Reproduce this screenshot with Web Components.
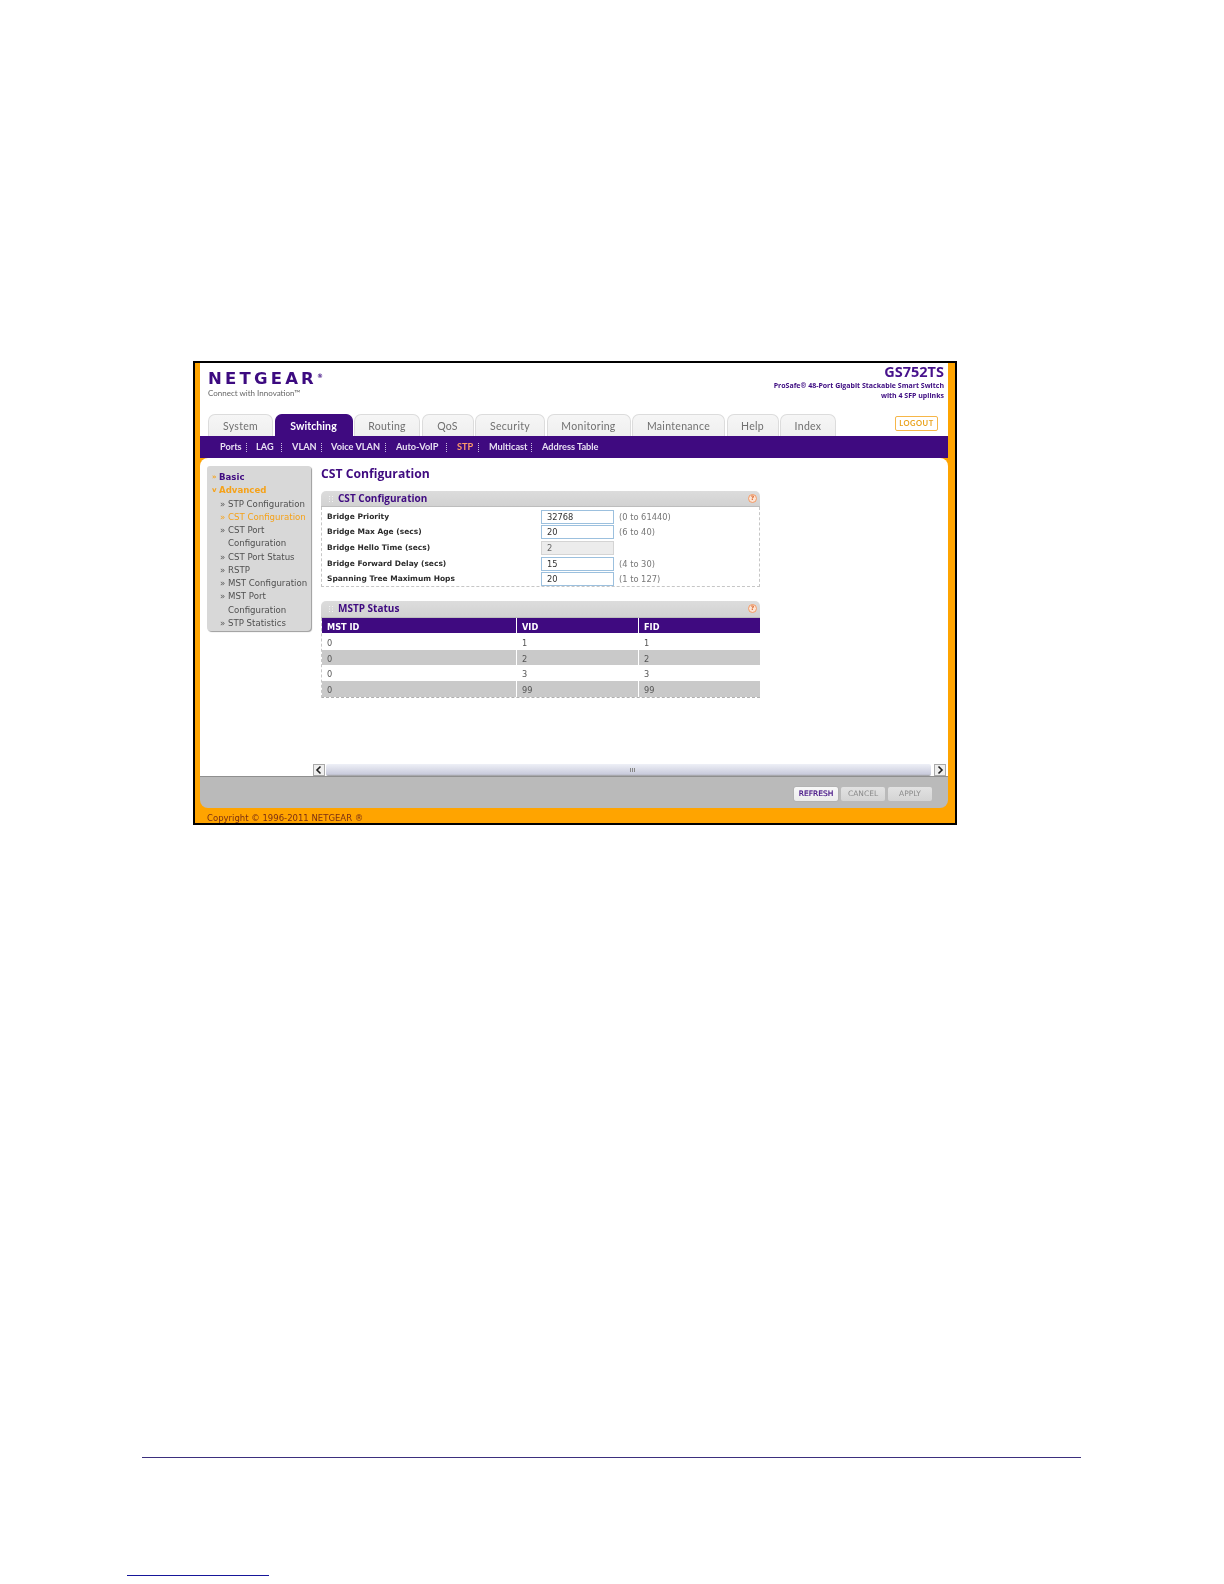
<!DOCTYPE html>
<html>
<head>
<meta charset="utf-8">
<title>CST Configuration</title>
<style>
  html, body { margin: 0; background: #fff; }
  body { font-family: "DejaVu Sans", sans-serif; }
</style>
</head>
<body>
<manual-page>
  <screen-frame>
    <top-header></top-header>
    <tab-bar active="Switching"></tab-bar>
    <sub-nav active="STP"></sub-nav>
    <main-area>
      <side-menu></side-menu>
      <page-title>CST Configuration</page-title>
      <panel-head>CST Configuration</panel-head>
      <cst-form></cst-form>
      <panel-head class="second">MSTP Status</panel-head>
      <mstp-table></mstp-table>
    </main-area>
    <action-bar></action-bar>
    <copy-line>Copyright © 1996-2011 NETGEAR ®</copy-line>
  </screen-frame>
</manual-page>

<script>
  // small helper so every element has an open shadow root
  class Base extends HTMLElement {
    constructor() {
      super();
      this.attachShadow({ mode: "open" });
    }
    connectedCallback() {
      this.shadowRoot.innerHTML = this.render();
    }
  }

  class ManualPage extends Base {
    render() {
      return `<style>
        :host { display: block; height: 1584px; overflow: hidden; background: #fff; }
        .shot { padding: 361px 0 0 193px; }
        .rule { height: 1px; background: #3b2f7d; margin: 632px 0 0 142px; width: 939px; }
        .foot { height: 1px; background: #16169a; margin: 117px 0 0 127px; width: 142px; }
      </style>
      <div class="shot"><slot></slot></div>
      <div class="rule"></div>
      <div class="foot"></div>`;
    }
  }

  class ScreenFrame extends Base {
    render() {
      return `<style>
        :host {
          display: flex; flex-direction: column; box-sizing: border-box;
          width: 764px; height: 464px;
          border: 2px solid #000; background: #ffa400;
          padding: 0 7px 0 5px;
          filter: blur(.4px);
        }
      </style><slot></slot>`;
    }
  }

  class TopHeader extends Base {
    render() {
      return `<style>
        :host { display: flex; justify-content: space-between; height: 51px; background: #fff; padding: 0 4px 0 8px; color: #3f0f7f; }
        .logo { font: 700 16.5px/16px "DejaVu Sans", sans-serif; letter-spacing: 3.2px; color: #3c0a80; margin-top: 8px; white-space: nowrap; }
        .logo sup { font-size: 6px; letter-spacing: 0; vertical-align: 6px; line-height: 0; }
        .tag { font: 8px/10px Lato, sans-serif; color: #666; margin-top: 1px; }
        .right { text-align: right; }
        .model { font: 700 14.5px/17px "Open Sans", sans-serif; color: #47128c; }
        .desc { font: 700 7px/9.2px "Open Sans", sans-serif; color: #3c0a80; margin-top: 1.400px; }
      </style>
      <div>
        <div class="logo">NETGEAR<sup>®</sup></div>
        <div class="tag">Connect with Innovation™</div>
      </div>
      <div class="right">
        <div class="model">GS752TS</div>
        <div class="desc">ProSafe® 48-Port Gigabit Stackable Smart Switch<br>with 4 SFP uplinks</div>
      </div>`;
    }
  }

  const TABS = [["System", 65], ["Switching", 78], ["Routing", 66], ["QoS", 52], ["Security", 70], ["Monitoring", 84], ["Maintenance", 93], ["Help", 52], ["Index", 56]];

  class TabBar extends Base {
    render() {
      const active = this.getAttribute("active");
      const tabs = TABS.map(([n, w]) =>
        `<div class="tab ${n === active ? "on" : ""}" style="width:${w}px">${n}</div>`).join("");
      return `<style>
        :host { display: flex; align-items: flex-end; height: 22px; background: #fff; padding-left: 8px; gap: 1.5px; position: relative; }
        .tab {
          box-sizing: border-box; height: 22px; border: 1px solid #dcdcdc; border-bottom: 0;
          border-radius: 7px 7px 0 0; background: linear-gradient(#f6f6f6, #efefef);
          text-align: center; font: 10.5px/22px Lato, sans-serif; letter-spacing: .3px; color: #707070;
        }
        .on { background: #3f0a80; border-color: #3f0a80; color: #fff; font-weight: 700; letter-spacing: .1px; }
        .logout {
          position: absolute; left: 695px; top: 2px; box-sizing: border-box; width: 43px; height: 15px;
          border: 1px solid #f6b648; border-radius: 2px; background: #fff;
          text-align: center; font: 700 7.5px/13px Lato, sans-serif; letter-spacing: .5px; color: #e9a21c;
        }
      </style>${tabs}<div class="logout">LOGOUT</div>`;
    }
  }

  // name, distance to next item, place of the dotted separator
  const SUBS = [["Ports", 36, 26], ["LAG", 36, 25], ["VLAN", 39, 29], ["Voice VLAN", 65, 54], ["Auto-VoIP", 61, 50], ["STP", 32, 21], ["Multicast", 53, 42], ["Address Table", 70]];

  class SubNav extends Base {
    render() {
      const active = this.getAttribute("active");
      const items = SUBS.map(([n, w, s]) =>
        `<span class="it ${n === active ? "on" : ""}" style="width:${w}px">${n}${s ? `<i style="left:${s}px"></i>` : ""}</span>`).join("");
      return `<style>
        :host { display: flex; align-items: center; height: 22px; background: #3f0a80; padding-left: 20px; }
        .it { position: relative; display: block; font: 700 9.2px/22px Lato, sans-serif; color: #e8e0f2; white-space: nowrap; }
        .on { color: #ff9c6a; }
        i { position: absolute; top: 7px; height: 9px; border-right: 1px dotted #cbbfe0; }
      </style>${items}`;
    }
  }

  class MainArea extends Base {
    render() {
      return `<style>
        :host { display: flex; flex-direction: column; height: 319px; background: #fff; border-radius: 8px 8px 0 0; border-bottom: 1px solid #8f8f8f; box-sizing: border-box; }
        .body { flex: 1; display: flex; min-height: 0; }
        .col { width: 439px; margin-left: 10px; }
        .bar { display: flex; align-items: stretch; height: 12px; margin: 0 2px 0 113px; gap: 1px; }
        .btn { box-sizing: border-box; width: 12px; border: 1px solid #a9a9a9; background: #eee; }
        .btn svg { display: block; }
        .btn.next { margin-left: 2px; }
        .track { flex: 1; position: relative; background: linear-gradient(#eef0f7, #c9cbdc 85%, #9a9a9a); border-radius: 2px; }
        .track::after { content: ""; position: absolute; left: 304px; top: 4px; width: 5px; height: 4px; background: repeating-linear-gradient(90deg, #888 0 1px, transparent 1px 2px); }
      </style>
      <div class="body">
        <slot name="side"></slot>
        <div class="col"><slot></slot></div>
      </div>
      <div class="bar">
        <div class="btn"><svg width="10" height="10" viewBox="0 0 10 10"><path d="M6.500 1.500 3 5l3.500 3.500" fill="none" stroke="#222" stroke-width="1.6"/></svg></div>
        <div class="track"></div>
        <div class="btn next"><svg width="10" height="10" viewBox="0 0 10 10"><path d="M3.500 1.500 7 5 3.500 8.500" fill="none" stroke="#222" stroke-width="1.6"/></svg></div>
      </div>`;
    }
    connectedCallback() {
      super.connectedCallback();
      this.querySelector("side-menu").slot = "side";
    }
  }

  const MENU = [
    ["STP Configuration"], ["CST Configuration", 1], ["CST Port<br>Configuration"], ["CST Port Status"],
    ["RSTP"], ["MST Configuration"], ["MST Port<br>Configuration"], ["STP Statistics"]
  ];

  class SideMenu extends Base {
    render() {
      const rows = MENU.map(([t, cur]) =>
        `<div class="row ${cur ? "cur" : ""}"><b>»</b><span>${t}</span></div>`).join("");
      return `<style>
        :host {
          display: block; box-sizing: border-box; flex: none; width: 104px; height: 165px; margin: 8px 0 0 7px; padding: 5px 0 0 5px;
          background: #d8d8d8; border-radius: 3px 3px 4px 4px; box-shadow: 1px 1px 1px #9c9c9c;
          font: 8.6px/13.25px "DejaVu Sans", sans-serif; color: #505050;
        }
        .top { display: flex; gap: 3px; font-weight: 700; color: #3f0a80; }
        .top b { color: #f5a21a; width: 4px; font-size: 7px; }
        .adv { color: #f5a21a; }
        .row { display: flex; gap: 2px; margin-left: 8px; white-space: nowrap; }
        .row b { font-weight: 400; width: 6px; flex: none; color: #555; }
        .cur, .cur b { color: #f5a21a; }
      </style>
      <div class="top"><b>»</b><span>Basic</span></div>
      <div class="top adv"><b>v</b><span>Advanced</span></div>
      ${rows}`;
    }
  }

  class PageTitle extends Base {
    render() {
      return `<style>
        :host { display: block; height: 33px; padding-top: 8px; box-sizing: border-box; font: 700 12.2px/16px "Open Sans", sans-serif; color: #3f0a80; }
      </style><slot></slot>`;
    }
  }

  class PanelHead extends Base {
    render() {
      return `<style>
        :host {
          display: flex; align-items: center; gap: 5px; box-sizing: border-box; height: 16px; padding: 0 3px 0 8px;
          background: linear-gradient(#dcdcdc, #d2d2d2); border-radius: 5px 5px 0 0; border-bottom: 1px solid #bdbdbd;
          font: 700 10px/15px "Open Sans", sans-serif; color: #3f0a80;
        }
        :host(.second) { margin-top: 14px; height: 17px; padding-bottom: 1px; }
        .txt { flex: 1; }
        .help {
          width: 9px; height: 9px; box-sizing: border-box; border: 1.5px solid #f29a66; border-radius: 50%; background: #fde4d4;
          font: 700 6px/6px "DejaVu Sans", sans-serif; color: #d9642a; text-align: center;
        }
      </style>
      <svg width="4" height="6" viewBox="0 0 4 6"><path d="M0 0h1v1H0zM3 0h1v1H3zM0 2.500h1v1H0zM3 2.500h1v1H3zM0 5h1v1H0zM3 5h1v1H3z" fill="#f2f2f2"/></svg>
      <span class="txt"><slot></slot></span>
      <span class="help">?</span>`;
    }
  }

  const FIELDS = [
    ["Bridge Priority", "32768", "(0 to 61440)"],
    ["Bridge Max Age (secs)", "20", "(6 to 40)"],
    ["Bridge Hello Time (secs)", "2", "", 1],
    ["Bridge Forward Delay (secs)", "15", "(4 to 30)"],
    ["Spanning Tree Maximum Hops", "20", "(1 to 127)"]
  ];

  class CstForm extends Base {
    render() {
      const rows = FIELDS.map(([l, v, r, off]) => `
        <div class="lab">${l}</div>
        <div class="inp ${off ? "off" : ""}">${v}</div>
        <div class="rng">${r}</div>`).join("");
      return `<style>
        :host {
          display: grid; grid-template-columns: 214px 73px 1fr; grid-auto-rows: 15.6px; align-items: center;
          box-sizing: border-box; height: 80px; padding: 2px 0 0 5px;
          border: 1px dashed #c6c6c6; border-width: 0 1px 1px 1px;
          font: 8.3px/12px "DejaVu Sans", sans-serif;
        }
        .lab { font-weight: 700; font-size: 7.5px; color: #2b2b2b; white-space: nowrap; }
        .inp { box-sizing: border-box; height: 14px; border: 1px solid #9cc0de; padding-left: 5px; color: #333; line-height: 12px; }
        .off { background: #ececec; border-color: #d4d4d4; color: #666; }
        .rng { padding-left: 5px; color: #777; }
      </style>${rows}`;
    }
  }

  const ROWS = [["0", "1", "1"], ["0", "2", "2"], ["0", "3", "3"], ["0", "99", "99"]];

  class MstpTable extends Base {
    render() {
      const cells = r => r.map(c => `<div>${c}</div>`).join("");
      return `<style>
        :host { display: block; border-bottom: 1px dashed #b0b0b0; border-left: 1px dashed #c6c6c6; font: 8.2px/15px "DejaVu Sans", sans-serif; }
        .r { display: grid; grid-template-columns: 194px 122px 1fr; height: 15.7px; color: #555; overflow: hidden; }
        .r div { padding: 2px 0 0 5px; border-left: 1px solid #fff; }
        .r div:first-child { border-left: 0; }
        .h { background: #3f0a80; color: #fff; font-weight: 700; height: 15px; border-bottom: 1px solid #fff; }
        .h div { padding-top: 1.500px; }
        .g { background: #c9c9c9; }
      </style>
      <div class="r h">${cells(["MST ID", "VID", "FID"])}</div>
      ${ROWS.map((r, i) => `<div class="r ${i % 2 ? "g" : ""}">${cells(r)}</div>`).join("")}`;
    }
  }

  class ActionBar extends Base {
    render() {
      return `<style>
        :host { display: flex; justify-content: flex-end; align-items: flex-start; gap: 3px; box-sizing: border-box; height: 31px; padding: 10px 16px 0 0; background: #bababa; border-radius: 0 0 8px 8px; }
        .b {
          box-sizing: border-box; width: 44px; height: 14px; border-radius: 2px; background: linear-gradient(#e2e2e2, #d4d4d4);
          text-align: center; font: 7.5px/14px "DejaVu Sans", sans-serif; color: #8a8a8a;
        }
        .on { background: linear-gradient(#f8f8f8, #ececec); color: #3f0a80; font-weight: 400; -webkit-text-stroke: .2px #3f0a80; box-shadow: 0 0 1px #777; }
      </style>
      <div class="b on">REFRESH</div><div class="b">CANCEL</div><div class="b">APPLY</div>`;
    }
  }

  class CopyLine extends Base {
    render() {
      return `<style>
        :host { display: block; height: 15px; padding-left: 7px; overflow: hidden; font: 8.5px/21px "DejaVu Sans", sans-serif; color: #7a2f14; }
      </style><slot></slot>`;
    }
  }

  customElements.define("manual-page", ManualPage);
  customElements.define("screen-frame", ScreenFrame);
  customElements.define("top-header", TopHeader);
  customElements.define("tab-bar", TabBar);
  customElements.define("sub-nav", SubNav);
  customElements.define("main-area", MainArea);
  customElements.define("side-menu", SideMenu);
  customElements.define("page-title", PageTitle);
  customElements.define("panel-head", PanelHead);
  customElements.define("cst-form", CstForm);
  customElements.define("mstp-table", MstpTable);
  customElements.define("action-bar", ActionBar);
  customElements.define("copy-line", CopyLine);
</script>
</body>
</html>
